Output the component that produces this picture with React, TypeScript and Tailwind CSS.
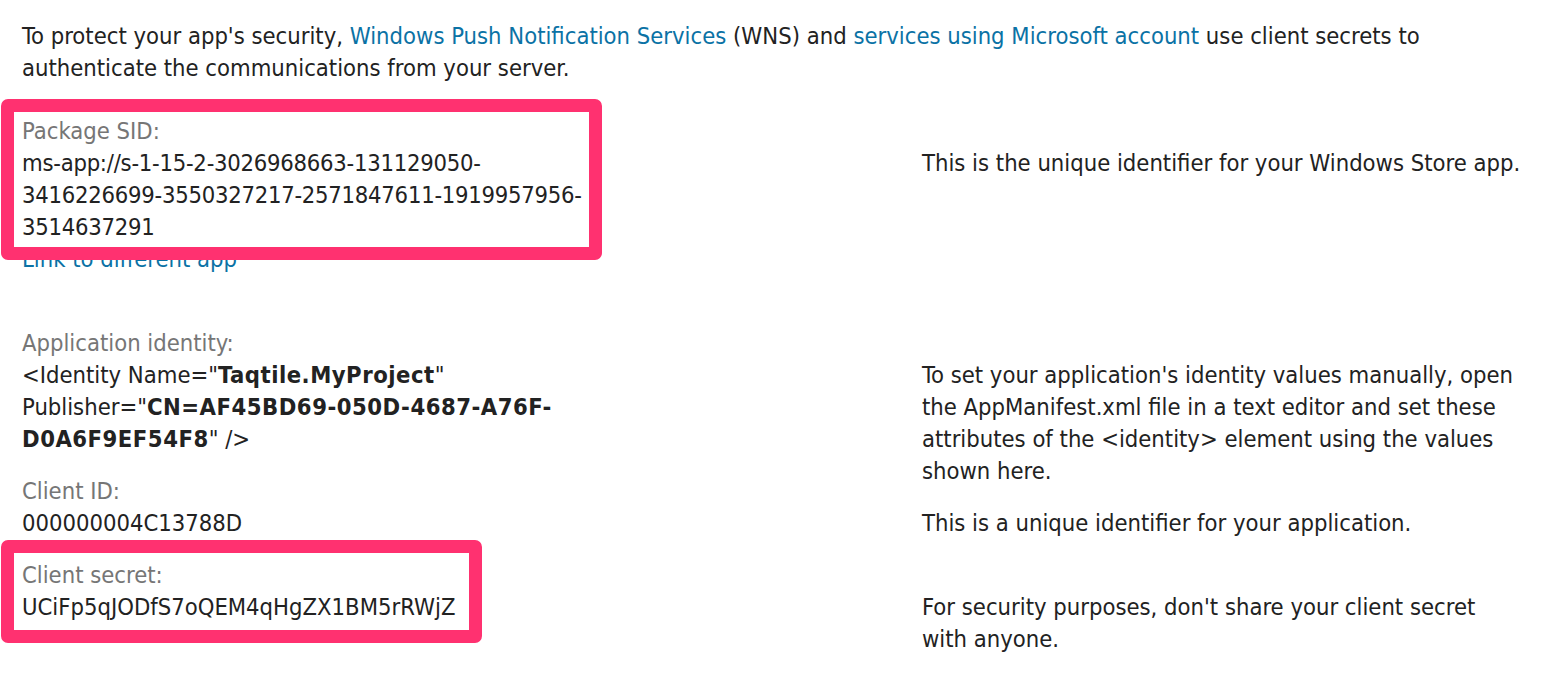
const linkCls = "text-[#0b72a5]";
const labelCls = "text-[#767676]";
const boldCls = "font-bold tracking-[0.5px]";

function Desc({ children, overflow = false }: { children: React.ReactNode; overflow?: boolean }) {
  // descriptions line up with the value under each label
  return <div className={`pt-[32px] whitespace-nowrap ${overflow ? "-mb-[32px]" : ""}`}>{children}</div>;
}

export default function App() {
  return (
    <div className="relative min-h-[676px] bg-white pl-[22px] pt-[20px] font-['DejaVu_Sans_Condensed','DejaVu_Sans',sans-serif] text-[23.6px] leading-[32px] text-[#222]">
      <p className="whitespace-nowrap">
        To protect your app's security, <a className={linkCls}>Windows Push Notification Services</a> (WNS) and{" "}
        <a className={linkCls}>services using Microsoft account</a> use client secrets to
        <br />
        authenticate the communications from your server.
      </p>

      <div className="mt-[31px] flex">
        <div className="w-[900px] whitespace-nowrap">
          <div className={labelCls}>Package SID:</div>
          <div className="tracking-[-0.25px]">
            ms-app://s-1-15-2-3026968663-131129050-
            <br />
            3416226699-3550327217-2571847611-1919957956-
            <br />
            3514637291
          </div>
          <a className={linkCls}>Link to different app</a>
        </div>
        <Desc>This is the unique identifier for your Windows Store app.</Desc>
      </div>

      <div className="mt-[52px] flex">
        <div className="w-[900px] whitespace-nowrap">
          <div className={labelCls}>Application identity:</div>
          <div>
            &lt;Identity Name="<b className={boldCls}>Taqtile.MyProject</b>"
            <br />
            Publisher="<b className={boldCls}>CN=AF45BD69-050D-4687-A76F-</b>
            <br />
            <b className={boldCls}>D0A6F9EF54F8</b>" /&gt;
          </div>
        </div>
        <Desc overflow>
          To set your application's identity values manually, open
          <br />
          the AppManifest.xml file in a text editor and set these
          <br />
          attributes of the &lt;identity&gt; element using the values
          <br />
          shown here.
        </Desc>
      </div>

      <div className="mt-[20px] flex">
        <div className="w-[900px]">
          <div className={labelCls}>Client ID:</div>
          <div>000000004C13788D</div>
        </div>
        <Desc>This is a unique identifier for your application.</Desc>
      </div>

      <div className="mt-[20px] flex">
        <div className="w-[900px]">
          <div className={labelCls}>Client secret:</div>
          <div>UCiFp5qJODfS7oQEM4qHgZX1BM5rRWjZ</div>
        </div>
        <Desc>
          For security purposes, don't share your client secret
          <br />
          with anyone.
        </Desc>
      </div>

      {/* pink annotation boxes drawn over the page */}
      <div className="absolute left-[1px] top-[99px] h-[161px] w-[601px] rounded-[7px] border-[13px] border-[#ff3170]" />
      <div className="absolute left-[1px] top-[540px] h-[103px] w-[481px] rounded-[7px] border-[13px] border-[#ff3170]" />
    </div>
  );
}
